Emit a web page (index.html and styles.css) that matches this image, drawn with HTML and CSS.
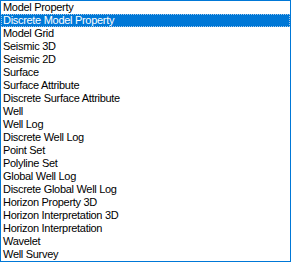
FILE: index.html
```html
<!DOCTYPE html>
<html>
<head>
<meta charset="utf-8">
<link rel="stylesheet" href="styles.css">
</head>
<body>
<ul class="list">
<li class="item">Model Property</li>
<li class="item selected">Discrete Model Property</li>
<li class="item">Model Grid</li>
<li class="item">Seismic 3D</li>
<li class="item">Seismic 2D</li>
<li class="item">Surface</li>
<li class="item">Surface Attribute</li>
<li class="item">Discrete Surface Attribute</li>
<li class="item">Well</li>
<li class="item">Well Log</li>
<li class="item">Discrete Well Log</li>
<li class="item">Point Set</li>
<li class="item">Polyline Set</li>
<li class="item">Global Well Log</li>
<li class="item">Discrete Global Well Log</li>
<li class="item">Horizon Property 3D</li>
<li class="item">Horizon Interpretation 3D</li>
<li class="item">Horizon Interpretation</li>
<li class="item">Wavelet</li>
<li class="item">Well Survey</li>
</ul>
</body>
</html>
```
FILE: styles.css
```css
html, body {
  margin: 0;
  padding: 0;
  background: #ffffff;
}
.list {
  box-sizing: border-box;
  width: 291px;
  height: 262px;
  margin: 0;
  padding: 0;
  list-style: none;
  border: 1px solid #0078d7;
  overflow: hidden;
  font-family: "Liberation Sans", Arial, sans-serif;
  font-size: 11px;
  letter-spacing: -0.3px;
  color: #000000;
}
.item {
  height: 13px;
  line-height: 13px;
  padding-left: 2px;
  white-space: nowrap;
}
.selected {
  background: #0078d7;
  color: #ffffff;
  outline: 1px dotted #9fc7ea;
  outline-offset: -1px;
}
```
